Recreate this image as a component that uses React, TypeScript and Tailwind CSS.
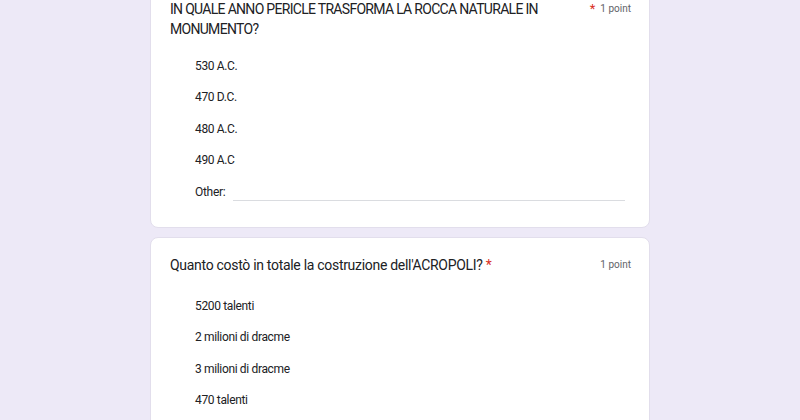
import React from 'react';

const Option = ({ label }: { label: string }) => (
    <div className="h-[31.5px] flex items-center pl-[26px] text-[12px] tracking-[-0.35px] text-[#202124]">
        {label}
    </div>
);

const QuestionCard = ({
    title,
    options,
    other,
    asteriskInline,
    className,
    titleClass,
    titleGap,
}: {
    title: string;
    options: string[];
    other?: boolean;
    asteriskInline?: boolean;
    className?: string;
    titleClass: string;
    titleGap: string;
}) => (
    <div className={`bg-white rounded-[8px] border border-[#e2deec] px-[18px] pt-[18px] pb-[19px] ${className ?? ''}`}>
        <div className="flex items-start justify-between">
            <div className={`text-[14px] leading-[19.5px] text-[#202124] max-w-[412px] pl-[1px] ${titleClass}`}>
                {title}
                {asteriskInline && <span className="text-[#d93025] ml-[3px]">*</span>}
            </div>
            <div className="flex items-center gap-[5px] text-[10px] text-[#5f6368] pt-[1px] whitespace-nowrap">
                {!asteriskInline && <span className="text-[#d93025] text-[13px] leading-none">*</span>}
                <span>1 point</span>
            </div>
        </div>
        <div className={titleGap}>
            {options.map((o) => (
                <Option key={o} label={o} />
            ))}
            {other && (
                <div className="h-[31.5px] flex items-center pl-[26px] text-[12px] tracking-[-0.3px] text-[#202124]">
                    <span>Other:</span>
                    <div className="flex-1 ml-[8px] mr-[6px] mt-[18px] border-b border-[#dadce0]" />
                </div>
            )}
        </div>
    </div>
);

export default function App() {
    return (
        <div
            className="min-h-screen bg-[#ede9f7] overflow-hidden"
            style={{ fontFamily: 'Roboto, "Noto Sans", sans-serif' }}
        >
            <div className="w-[500px] ml-[150px] -mt-[19px]">
                <QuestionCard
                    title="IN QUALE ANNO PERICLE TRASFORMA LA ROCCA NATURALE IN MONUMENTO?"
                    options={['530 A.C.', '470 D.C.', '480 A.C.', '490 A.C']}
                    other
                    titleClass="tracking-[-0.7px]"
                    titleGap="mt-[11px]"
                />
                <QuestionCard
                    className="mt-[9px]"
                    title="Quanto costò in totale la costruzione dell'ACROPOLI?"
                    options={['5200 talenti', '2 milioni di dracme', '3 milioni di dracme', '470 talenti']}
                    asteriskInline
                    titleClass="tracking-[-0.3px]"
                    titleGap="mt-[15px]"
                />
            </div>
        </div>
    );
}
